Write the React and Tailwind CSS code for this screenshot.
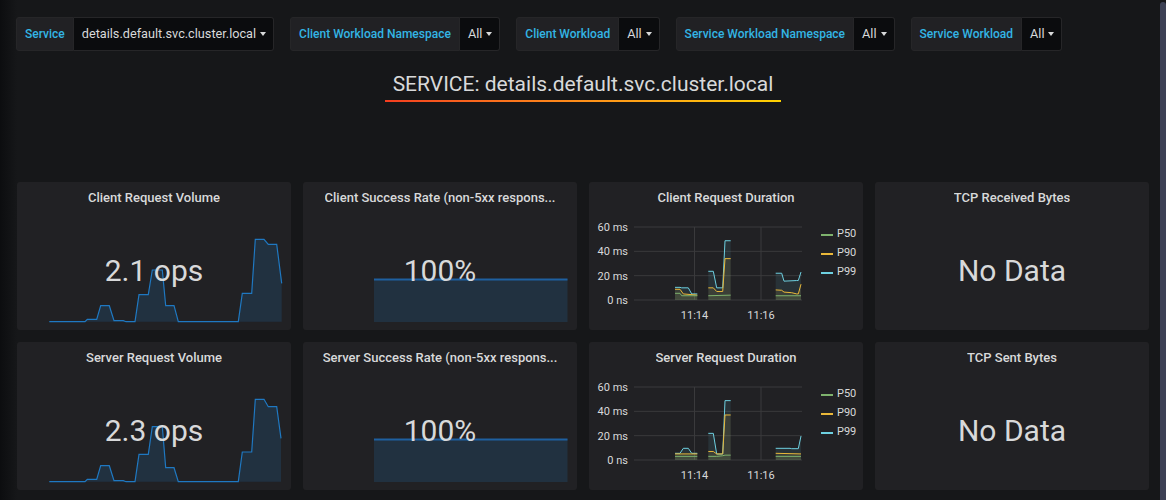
import React from "react";

const FONT = { fontFamily: "Roboto, 'Liberation Sans', sans-serif" };

const FILTERS = [
  { label: "Service", value: "details.default.svc.cluster.local" },
  { label: "Client Workload Namespace", value: "All" },
  { label: "Client Workload", value: "All" },
  { label: "Service Workload Namespace", value: "All" },
  { label: "Service Workload", value: "All" },
];

const COLORS = { P50: "#7eb26d", P90: "#eab839", P99: "#6ed0e0" };

// [x, ms] pairs, panel-local x
const CLIENT_DURATION = {
  P99: [
    [[86, 10.4], [91, 10.4], [92.7, 10], [99.3, 10], [102.7, 5], [108.3, 5]],
    [[119.3, 23.6], [124.3, 23.6], [127.7, 10], [133.7, 10], [136, 48.7], [141.7, 48.7]],
    [[186.7, 22], [192.7, 22], [195, 15.5], [207.7, 16], [209.3, 16], [212, 23]],
  ],
  P90: [
    [[86, 8.8], [91, 8.8], [94.3, 5], [108.3, 4]],
    [[119.3, 10], [124.3, 10], [127.7, 7], [133.7, 7], [136, 34], [141.7, 34]],
    [[186.7, 8.3], [192.7, 8], [195, 6.5], [202.7, 6], [207.7, 5], [209.3, 5], [212, 13]],
  ],
  P50: [
    [[86, 5.5], [91, 5.5], [92.7, 3.5], [108.3, 3.5]],
    [[119.3, 3.5], [141.7, 4]],
    [[186.7, 3.5], [212, 3.5]],
  ],
};

const SERVER_DURATION = {
  P99: [
    [[86, 5.5], [91, 5.5], [94.3, 9.6], [99.3, 9.6], [102.7, 5.5], [108.3, 5.5]],
    [[119.3, 21.9], [124.3, 21.9], [127.7, 4.9], [133.7, 4.9], [136, 48.8], [141.7, 48.8]],
    [[186.7, 9.6], [201, 9.6], [202.7, 9.3], [209.3, 9.3], [212, 19.7]],
  ],
  P90: [
    [[86, 5], [108.3, 5]],
    [[119.3, 7], [124.3, 7], [127.7, 5], [133.7, 5], [136, 37], [141.7, 37]],
    [[186.7, 5.5], [212, 5]],
  ],
  P50: [
    [[86, 3], [108.3, 3]],
    [[119.3, 3], [127.7, 3], [133.7, 3.5], [136, 4], [141.7, 4]],
    [[186.7, 3], [212, 3]],
  ],
};

const CLIENT_SPARK = [
  [32.3, 139.7], [68, 139.7], [70.3, 137.3], [79.7, 137.3], [83.7, 123.7], [92.3, 123.7],
  [97, 138.7], [106.3, 138.7], [109, 139.7], [118, 139.7], [122, 112.7], [131.3, 112.7],
  [135.3, 88], [145.3, 88], [148.7, 123.7], [157, 123.7], [161.3, 139.7], [221.3, 139.7],
  [225.3, 111.3], [234.7, 111.3], [238.3, 57.3], [247, 57.3], [251.3, 62.3], [259.7, 62.3],
  [264.7, 101.3],
];

const SERVER_SPARK = [
  [32.3, 139.7], [68, 139.7], [70.3, 137.3], [79.7, 137.3], [83.7, 123.7], [92.3, 123.7],
  [97, 138.7], [106.3, 138.7], [109, 139.7], [118, 139.7], [122, 112.3], [131.3, 112.3],
  [135.3, 84.7], [145.3, 84.7], [148.7, 125.7], [157, 125.7], [161.3, 139.7], [221.3, 139.7],
  [225.3, 110], [234.7, 110], [238.3, 57.3], [247, 57.3], [251.3, 64.7], [259.7, 64.7],
  [264, 96.3],
];

function Filter({ label, value }) {
  return (
    <div className="flex h-[34px]">
      <div className="flex items-center px-[8px] bg-[#212124] border border-[#262628] rounded-l-[3px] text-[12px] font-medium text-[#33b5e5]">
        {label}
      </div>
      <div className="flex items-center gap-[4px] pl-[8px] pr-[7px] bg-[#0b0c0e] border border-l-0 border-[#262628] rounded-r-[3px] text-[12.7px] text-[#d8d9da]">
        <span>{value}</span>
        <span className="w-0 h-0 border-l-[3px] border-r-[3px] border-t-[4px] border-l-transparent border-r-transparent border-t-[#d8d9da]" />
      </div>
    </div>
  );
}

function Panel({ title, children }) {
  return (
    <div className="relative h-[148px] bg-[#212124] rounded-[3px] overflow-hidden">
      <div className="relative z-10 h-[30px] pt-[1px] flex items-center justify-center text-[13px] font-medium text-[#d8d9da] px-3">
        <span className="truncate">{title}</span>
      </div>
      {children}
    </div>
  );
}

function BigValue({ children }) {
  return (
    <div className="absolute inset-x-0 top-[30px] bottom-0 flex items-center justify-center text-[30px] text-[#d8d9da] z-10">
      <span className="leading-none">{children}</span>
    </div>
  );
}

function Sparkline({ points }) {
  const line = points.map((p) => p.join(",")).join(" ");
  const first = points[0];
  const last = points[points.length - 1];
  const area = `${first[0]},139.7 ${line} ${last[0]},139.7`;
  return (
    <svg className="absolute inset-0" width="274" height="148" viewBox="0 0 274 148">
      <polygon points={area} fill="#1f78c1" fillOpacity="0.18" />
      <polyline points={line} fill="none" stroke="#1f78c1" strokeWidth="1.2" />
    </svg>
  );
}

function SuccessBar() {
  return (
    <svg className="absolute inset-0" width="274" height="148" viewBox="0 0 274 148">
      <rect x="71" y="97" width="193.5" height="43" fill="#1f78c1" fillOpacity="0.18" />
      <line x1="71" y1="97.5" x2="264.5" y2="97.5" stroke="#1f60a0" strokeWidth="2" />
    </svg>
  );
}

const yOf = (ms) => 88 - (ms * 73) / 60;

function DurationGraph({ series }) {
  const grid = [
    { v: 60, label: "60 ms" },
    { v: 40, label: "40 ms" },
    { v: 20, label: "20 ms" },
    { v: 0, label: "0 ns" },
  ];
  return (
    <div className="flex">
      <svg width="224" height="118" viewBox="0 0 224 118" style={FONT}>
        {grid.map((g) => (
          <g key={g.v}>
            <line x1="45" x2="213" y1={yOf(g.v)} y2={yOf(g.v)} stroke="#3a3a3c" strokeWidth="1" />
            <text x="39" y={yOf(g.v) + 4} textAnchor="end" fontSize="11" fill="#d8d9da">
              {g.label}
            </text>
          </g>
        ))}
        <line x1="105.5" x2="105.5" y1="15" y2="88" stroke="#3a3a3c" />
        <line x1="172" x2="172" y1="15" y2="88" stroke="#3a3a3c" />
        <text x="105.5" y="106.5" textAnchor="middle" fontSize="11" fill="#d8d9da">11:14</text>
        <text x="172" y="106.5" textAnchor="middle" fontSize="11" fill="#d8d9da">11:16</text>
        {["P99", "P90", "P50"].map((k) =>
          series[k].map((seg, i) => {
            const pts = seg.map(([x, v]) => `${x},${yOf(v)}`).join(" ");
            const area = `${seg[0][0]},88 ${pts} ${seg[seg.length - 1][0]},88`;
            return (
              <g key={k + i}>
                <polygon points={area} fill={COLORS[k]} fillOpacity="0.1" />
                <polyline points={pts} fill="none" stroke={COLORS[k]} strokeWidth="1" />
              </g>
            );
          })
        )}
      </svg>
      <div className="flex flex-col pt-[13px] ml-[8px]">
        {["P50", "P90", "P99"].map((k) => (
          <div key={k} className="flex items-center h-[19px] gap-[4px] text-[11px] text-[#d8d9da]">
            <span className="w-[12px] h-[2px]" style={{ background: COLORS[k] }} />
            <span>{k}</span>
          </div>
        ))}
      </div>
    </div>
  );
}

export default function App() {
  return (
    <div
      className="relative w-[1166px] h-[500px] overflow-hidden bg-[linear-gradient(90deg,#0c0d0f_0px,#161719_17px)]"
      style={FONT}
    >
      {/* Variables */}
      <div className="flex gap-4 pl-[16px] pt-[17px]">
        {FILTERS.map((f) => (
          <Filter key={f.label} {...f} />
        ))}
      </div>

      {/* Title */}
      <div className="flex justify-center mt-[19px]">
        <div className="relative px-[8px] pb-[4px] text-[21px] leading-[28px] text-[#d8d9da]">
          SERVICE: details.default.svc.cluster.local
          <div className="absolute left-0 right-0 bottom-0 h-[2px] bg-linear-to-r from-[#f43c1f] to-[#ffd200]" />
        </div>
      </div>

      {/* Panels */}
      <div className="grid grid-cols-4 gap-3 w-[1132px] ml-[17px] mt-[80px]">
        <Panel title="Client Request Volume">
          <Sparkline points={CLIENT_SPARK} />
          <BigValue>2.1 ops</BigValue>
        </Panel>
        <Panel title="Client Success Rate (non-5xx respons...">
          <SuccessBar />
          <BigValue>100%</BigValue>
        </Panel>
        <Panel title="Client Request Duration">
          <DurationGraph series={CLIENT_DURATION} />
        </Panel>
        <Panel title="TCP Received Bytes">
          <BigValue>No Data</BigValue>
        </Panel>

        <Panel title="Server Request Volume">
          <Sparkline points={SERVER_SPARK} />
          <BigValue>2.3 ops</BigValue>
        </Panel>
        <Panel title="Server Success Rate (non-5xx respons...">
          <SuccessBar />
          <BigValue>100%</BigValue>
        </Panel>
        <Panel title="Server Request Duration">
          <DurationGraph series={SERVER_DURATION} />
        </Panel>
        <Panel title="TCP Sent Bytes">
          <BigValue>No Data</BigValue>
        </Panel>
      </div>

      {/* scrollbar */}
      <div className="absolute right-0 top-[2px] w-[6px] h-[498px] rounded-t-[3px] bg-[#3d4155]" />
    </div>
  );
}
